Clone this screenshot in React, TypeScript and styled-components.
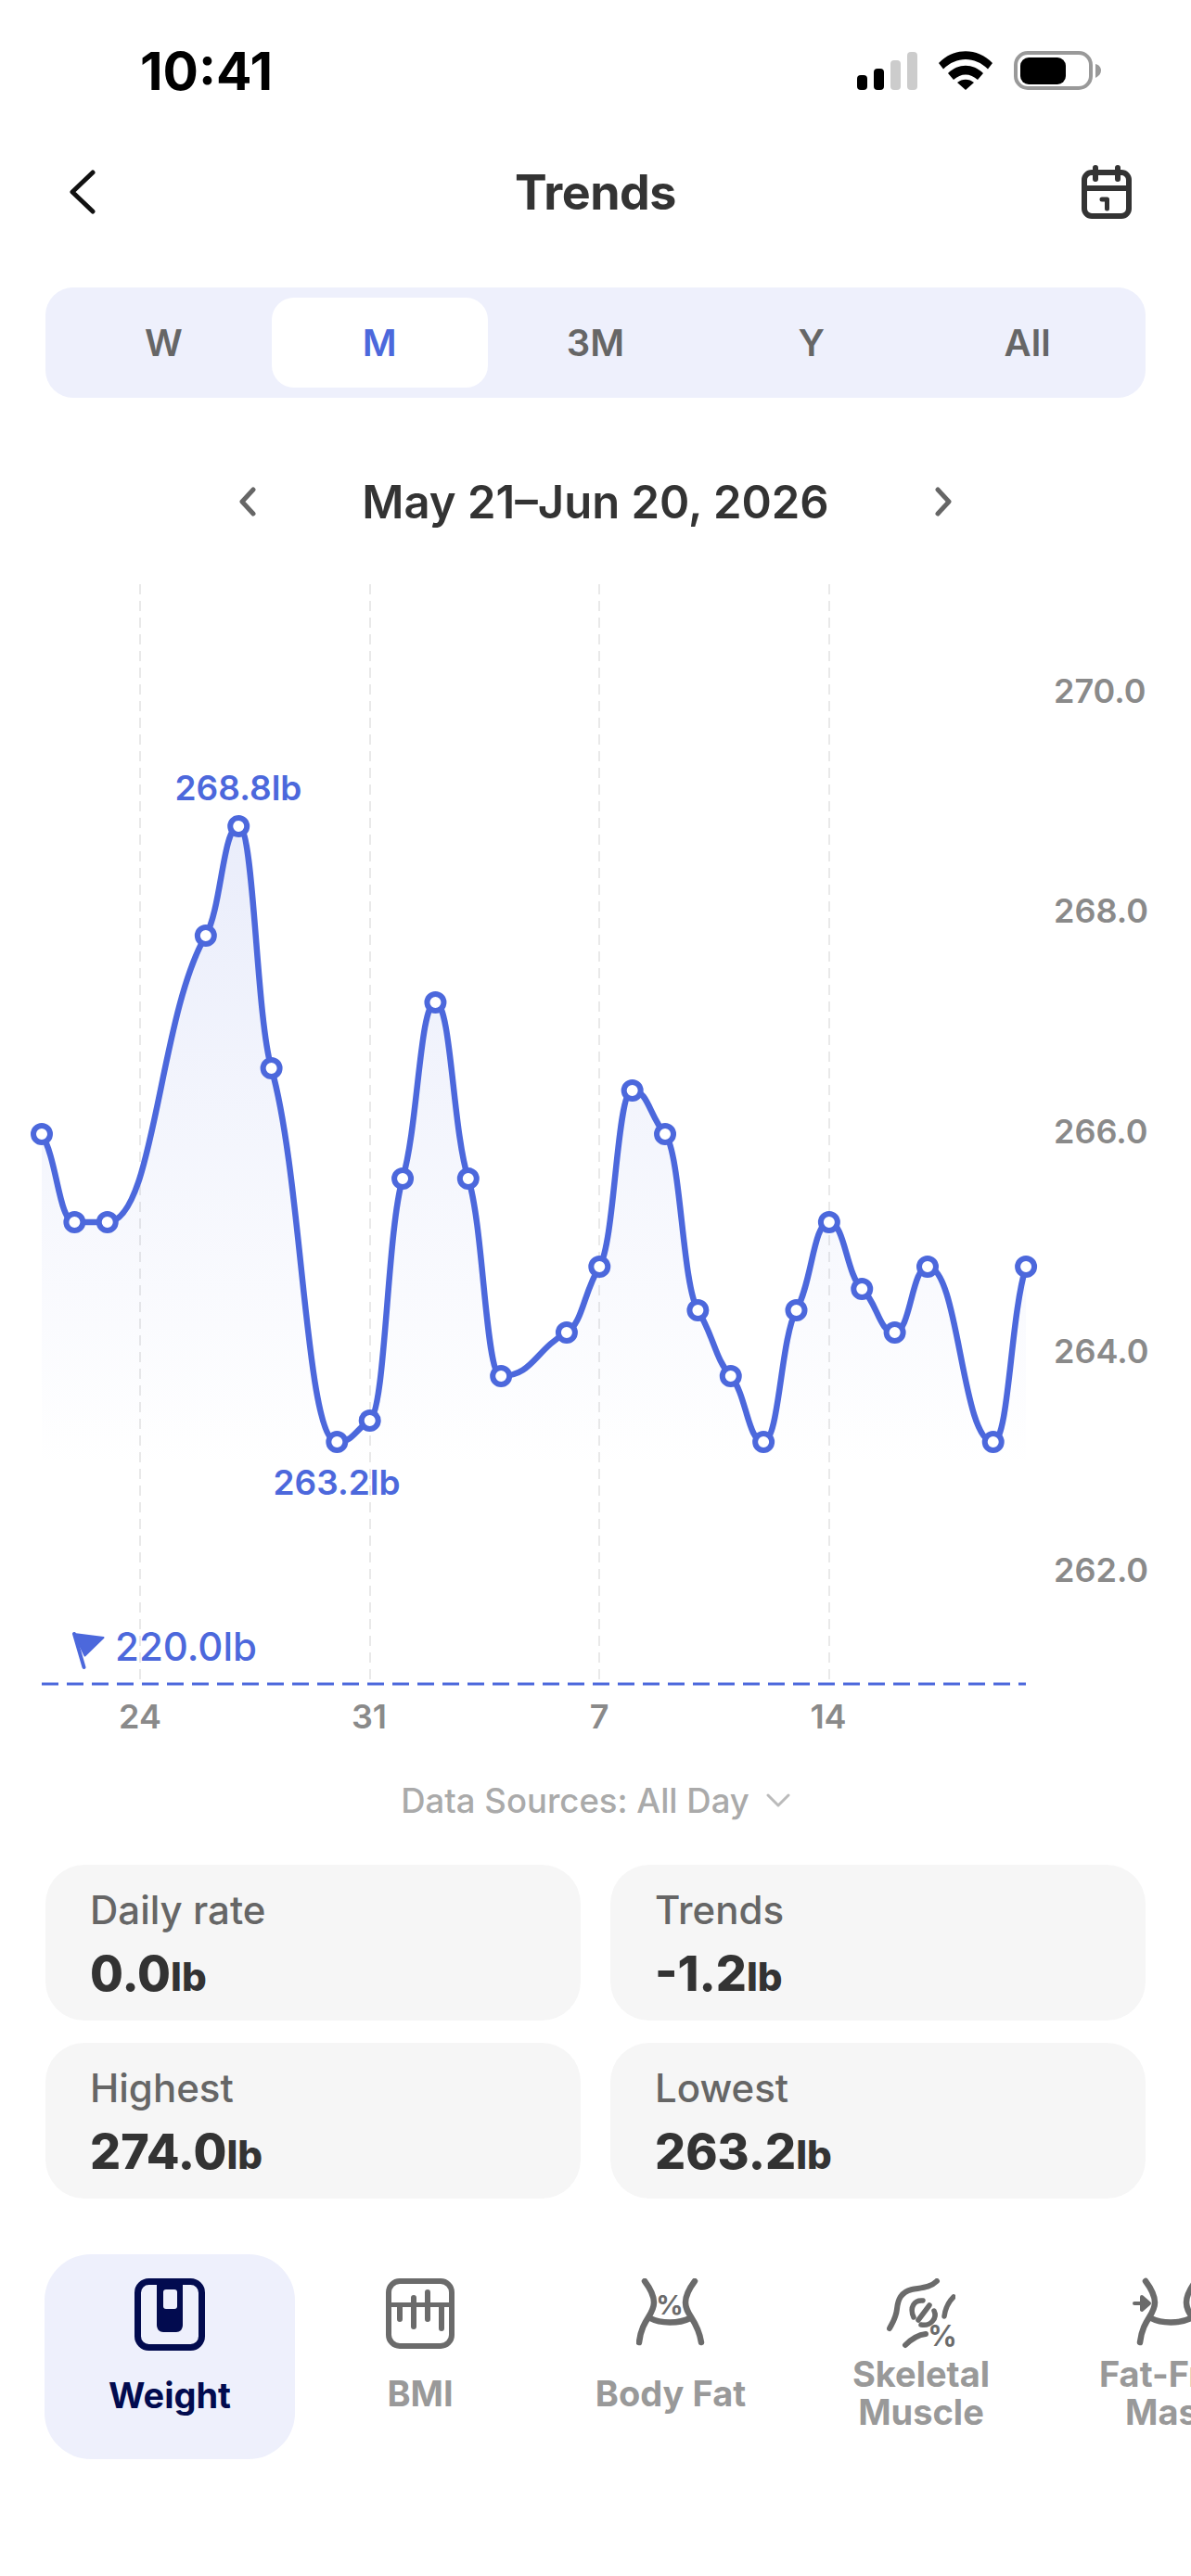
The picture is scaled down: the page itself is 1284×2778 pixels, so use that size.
import React from 'react';
import styled, { createGlobalStyle } from 'styled-components';

const BLUE = '#4c68dc';

const GlobalStyle = createGlobalStyle`
  html, body {
    margin: 0;
    padding: 0;
    background: #ffffff;
  }
  body {
    font-family: Inter, "Noto Sans", "Liberation Sans", sans-serif;
    -webkit-font-smoothing: antialiased;
  }
`;

type Point = { x: number; y: number };

const dayX = (i: number) => 45 + i * 35.37;

// day index from May 21 and the y of that reading, days with no reading are left out
const READINGS: [number, number][] = [
  [0, 1223], [1, 1318], [2, 1318], [5, 1009], [6, 891], [7, 1152], [9, 1555], [10, 1532],
  [11, 1271], [12, 1081], [13, 1271], [14, 1484], [16, 1437], [17, 1366], [18, 1176],
  [19, 1223], [20, 1413], [21, 1484], [22, 1555], [23, 1413], [24, 1318], [25, 1390],
  [26, 1437], [27, 1366], [29, 1555], [30, 1366],
];

const POINTS: Point[] = READINGS.map(([d, y]) => ({ x: dayX(d), y }));

// monotone curve, flatter at the points than d3 curveMonotoneX so the shoulders show
const smoothPath = (pts: Point[]) => {
  const n = pts.length;
  const slopes: number[] = [];
  for (let i = 0; i < n - 1; i++) {
    slopes.push((pts[i + 1].y - pts[i].y) / (pts[i + 1].x - pts[i].x));
  }
  const tangents: number[] = [slopes[0] * 0.6];
  for (let i = 1; i < n - 1; i++) {
    const a = slopes[i - 1];
    const b = slopes[i];
    tangents.push(a * b <= 0 ? 0 : (a * b * 1.1) / (a + b));
  }
  tangents.push(slopes[n - 2] * 0.6);

  let d = `M${pts[0].x} ${pts[0].y}`;
  for (let i = 0; i < n - 1; i++) {
    const dx = (pts[i + 1].x - pts[i].x) * 0.48;
    d += ` C${pts[i].x + dx} ${pts[i].y + tangents[i] * dx} ${pts[i + 1].x - dx} ${pts[i + 1].y - tangents[i + 1] * dx} ${pts[i + 1].x} ${pts[i + 1].y}`;
  }
  return d;
};

const LINE = smoothPath(POINTS);
const AREA_BOTTOM = 1585;
const AREA = `${LINE} L${POINTS[POINTS.length - 1].x} ${AREA_BOTTOM} L${POINTS[0].x} ${AREA_BOTTOM} Z`;

const Y_LABELS = [
  { text: '270.0', y: 758 },
  { text: '268.0', y: 995 },
  { text: '266.0', y: 1233 },
  { text: '264.0', y: 1470 },
  { text: '262.0', y: 1706 },
];

const X_LABELS = [
  { text: '24', x: 151, labelX: 151 },
  { text: '31', x: 399, labelX: 398 },
  { text: '7', x: 646, labelX: 646 },
  { text: '14', x: 894, labelX: 893 },
];

const Chart: React.FC = () => (
  <ChartSvg viewBox="0 581 1284 1331">
    <defs>
      <linearGradient id="areaFill" gradientUnits="userSpaceOnUse" x1="0" y1="891" x2="0" y2={AREA_BOTTOM}>
        <stop offset="0" stopColor={BLUE} stopOpacity="0.12" />
        <stop offset="1" stopColor={BLUE} stopOpacity="0" />
      </linearGradient>
    </defs>

    {X_LABELS.map((l) => (
      <line key={l.text} x1={l.x} x2={l.x} y1="630" y2="1811" stroke="#e9e9e9" strokeWidth="2" strokeDasharray="11 7" />
    ))}

    <path d={AREA} fill="url(#areaFill)" />
    <path d={LINE} fill="none" stroke={BLUE} strokeWidth="6.5" />
    {POINTS.map((p) => (
      <circle key={p.x} cx={p.x} cy={p.y} r="9" fill="#ffffff" stroke={BLUE} strokeWidth="6" />
    ))}

    <PeakLabel x="257" y="863" textAnchor="middle">268.8lb</PeakLabel>
    <PeakLabel x="363" y="1612" textAnchor="middle">263.2lb</PeakLabel>

    <path d="M80 1762 L111.5 1766 L91.5 1785.5 Z" fill={BLUE} stroke={BLUE} strokeWidth="2" strokeLinejoin="round" />
    <path d="M80 1762 L90.5 1798" fill="none" stroke={BLUE} strokeWidth="4" strokeLinecap="round" />
    <GoalLabel x="124" y="1791">220.0lb</GoalLabel>
    <line x1="45" x2="1106" y1="1816" y2="1816" stroke={BLUE} strokeWidth="3" strokeDasharray="18 9" />

    {Y_LABELS.map((l) => (
      <AxisLabel key={l.text} x="1136" y={l.y}>{l.text}</AxisLabel>
    ))}
    {X_LABELS.map((l) => (
      <AxisLabel key={l.text} x={l.labelX} y="1864" textAnchor="middle">{l.text}</AxisLabel>
    ))}
  </ChartSvg>
);

const SignalIcon = () => (
  <svg width="65" height="41" viewBox="0 0 65 41">
    <rect x="0" y="25" width="11" height="16" rx="4" fill="#000" />
    <rect x="18" y="18" width="11" height="23" rx="4" fill="#000" />
    <rect x="36" y="9" width="11" height="32" rx="4" fill="#cccccc" />
    <rect x="54" y="0" width="11" height="41" rx="4" fill="#cccccc" />
  </svg>
);

const WifiIcon = () => (
  <svg width="58" height="42" viewBox="0 0 58 42">
    <path d="M0 13 C16 -4 42 -4 58 13 L53 19.5 C39 5.5 19 5.5 5 19.5 Z" fill="#000" />
    <path d="M10 24 C21 13 37 13 48 24 L42 31 C34 23.5 24 23.5 16 31 Z" fill="#000" />
    <path d="M20 34 C25 29.5 33 29.5 38 34 L29 42 Z" fill="#000" />
  </svg>
);

const BatteryIcon = () => (
  <svg width="94" height="42" viewBox="0 0 94 42">
    <rect x="2" y="2" width="81" height="38" rx="13" fill="none" stroke="#999999" strokeWidth="4" />
    <rect x="7" y="7" width="49" height="29" rx="9" fill="#000" />
    <path d="M88 14 C92 15 94 18 94 21 C94 24 92 27 88 29 Z" fill="#999999" />
  </svg>
);

const BackIcon = () => (
  <svg width="28" height="48" viewBox="0 0 28 48">
    <path d="M25 3 L3 24 L25 45" fill="none" stroke="#111111" strokeWidth="5" strokeLinecap="round" strokeLinejoin="round" />
  </svg>
);

const CalendarIcon = () => (
  <svg width="54" height="58" viewBox="0 0 54 58">
    <rect x="3" y="8" width="48" height="47" rx="8" fill="none" stroke="#333333" strokeWidth="6" />
    <path d="M3 25 H51" stroke="#333333" strokeWidth="6" />
    <path d="M15 3 V15 M39 3 V15" stroke="#333333" strokeWidth="6" strokeLinecap="round" />
    <path d="M22 37 H27.5 V47" fill="none" stroke="#333333" strokeWidth="5" strokeLinecap="round" strokeLinejoin="round" />
  </svg>
);

const SmallChevron: React.FC<{ left?: boolean }> = ({ left }) => (
  <svg width="20" height="32" viewBox="0 0 20 32">
    <path
      d={left ? 'M16 3 L4 16 L16 29' : 'M4 3 L16 16 L4 29'}
      fill="none"
      stroke="#666666"
      strokeWidth="5"
      strokeLinecap="round"
      strokeLinejoin="round"
    />
  </svg>
);

const DownChevron = () => (
  <svg width="26" height="16" viewBox="0 0 26 16">
    <path d="M2 2 L13 13 L24 2" fill="none" stroke="#bbbbbb" strokeWidth="3" strokeLinecap="round" strokeLinejoin="round" />
  </svg>
);

const WeightIcon = () => (
  <svg width="76" height="78" viewBox="0 0 76 78" overflow="visible">
    <rect x="3.5" y="3.5" width="69" height="71" rx="12" fill="none" stroke="#020b4f" strokeWidth="7" />
    <path d="M24 2 H52 V50 C52 55 49 58 45 58 H31 C27 58 24 55 24 50 Z" fill="#020b4f" />
    <rect x="31" y="12" width="15" height="21" rx="3" fill="#eef0fc" />
  </svg>
);

const BmiIcon = () => (
  <svg width="74" height="76" viewBox="0 0 74 76">
    <rect x="3" y="3" width="68" height="70" rx="12" fill="none" stroke="#6b6b6b" strokeWidth="6" />
    <path d="M3 28.5 H71" stroke="#6b6b6b" strokeWidth="5" />
    <path d="M15 29 V44 M30 21 V52 M45 15 V44 M60 29 V54" stroke="#6b6b6b" strokeWidth="6" strokeLinecap="round" />
  </svg>
);

const Waist = () => (
  <>
    <path d="M9 3 C15 11 19 18 19 26 C19 40 6 44 3 69" fill="none" stroke="#6b6b6b" strokeWidth="6.5" strokeLinecap="round" />
    <path d="M63 3 C57 11 53 18 53 26 C53 40 66 44 70 69" fill="none" stroke="#6b6b6b" strokeWidth="6.5" strokeLinecap="round" />
    <path d="M15 43 C26 49 46 49 58 43" fill="none" stroke="#6b6b6b" strokeWidth="6.5" />
  </>
);

const BodyFatIcon = () => (
  <svg width="74" height="76" viewBox="0 0 74 76">
    <Waist />
    <IconPercent x="36" y="39" textAnchor="middle" fontSize="29">%</IconPercent>
  </svg>
);

const SkeletalIcon = () => (
  <svg width="74" height="76" viewBox="0 0 74 76">
    <path d="M54 3 C47 10 37 10 27 12 C15 15 12 23 11 33 C10 43 6 48 3 54" fill="none" stroke="#6b6b6b" strokeWidth="6" strokeLinecap="round" />
    <path d="M72 20 C66 26 63 33 62 41" fill="none" stroke="#6b6b6b" strokeWidth="5.5" strokeLinecap="round" />
    <path d="M20 72 C26 66 33 61 42 60" fill="none" stroke="#6b6b6b" strokeWidth="6" strokeLinecap="round" />
    <path d="M39 24 C30 23 24 31 29 42" fill="none" stroke="#6b6b6b" strokeWidth="5.5" strokeLinecap="round" />
    <path d="M46 29 L34 45" stroke="#6b6b6b" strokeWidth="5.5" strokeLinecap="round" />
    <path d="M51 35 C55 43 47 52 37 50" fill="none" stroke="#6b6b6b" strokeWidth="5.5" strokeLinecap="round" />
    <IconPercent x="60" y="73" textAnchor="middle" fontSize="31">%</IconPercent>
  </svg>
);

const FatFreeIcon = () => (
  <svg width="74" height="76" viewBox="0 0 74 76" overflow="visible">
    <Waist />
    <path d="M-3 27 H6 M5 20 L13 27 L5 34 Z" fill="#6b6b6b" stroke="#6b6b6b" strokeWidth="4" strokeLinejoin="round" strokeLinecap="round" />
  </svg>
);

type TabItem = { lines: string[]; icon: React.ReactNode; active?: boolean };

const TABS: TabItem[] = [
  { lines: ['Weight'], icon: <WeightIcon />, active: true },
  { lines: ['BMI'], icon: <BmiIcon /> },
  { lines: ['Body Fat'], icon: <BodyFatIcon /> },
  { lines: ['Skeletal', 'Muscle'], icon: <SkeletalIcon /> },
  { lines: ['Fat-Free', 'Mass'], icon: <FatFreeIcon /> },
];

const STATS = [
  { label: 'Daily rate', value: '0.0' },
  { label: 'Trends', value: '-1.2' },
  { label: 'Highest', value: '274.0' },
  { label: 'Lowest', value: '263.2' },
];

const RANGES = ['W', 'M', '3M', 'Y', 'All'];

export default function App() {
  return (
    <Page>
      <GlobalStyle />
      <StatusBar>
        <Time>10:41</Time>
        <StatusIcons>
          <SignalIcon />
          <WifiIcon />
          <BatteryIcon />
        </StatusIcons>
      </StatusBar>

      <Header>
        <BackAction>
          <BackIcon />
        </BackAction>
        <Title>Trends</Title>
        <CalendarAction>
          <CalendarIcon />
        </CalendarAction>
      </Header>

      <RangeTabs>
        {RANGES.map((r) => (
          <RangeTab key={r} $active={r === 'M'}>{r}</RangeTab>
        ))}
      </RangeTabs>

      <DateRow>
        <SmallChevron left />
        <DateText>May 21–Jun 20, 2026</DateText>
        <SmallChevron />
      </DateRow>

      <Chart />

      <DataSources>
        Data Sources: All Day
        <DownChevron />
      </DataSources>

      <StatGrid>
        {STATS.map((s) => (
          <StatCard key={s.label}>
            <StatLabel>{s.label}</StatLabel>
            <StatValue>
              {s.value}
              <StatUnit>lb</StatUnit>
            </StatValue>
          </StatCard>
        ))}
      </StatGrid>

      <MetricTabs>
        {TABS.map((t) => (
          <MetricTab key={t.lines[0]} $active={t.active}>
            {t.icon}
            <MetricLabel $active={t.active}>
              {t.lines.map((line) => (
                <span key={line}>{line}</span>
              ))}
            </MetricLabel>
          </MetricTab>
        ))}
      </MetricTabs>
    </Page>
  );
}

const Page = styled.div`
  width: 1284px;
  height: 2778px;
  overflow: hidden;
  background: #ffffff;
`;

const StatusBar = styled.div`
  height: 152px;
  display: flex;
  align-items: center;
  justify-content: space-between;
  padding: 0 97px 0 151px;
  box-sizing: border-box;
`;

const Time = styled.div`
  font-size: 57px;
  font-weight: 700;
  color: #000000;
`;

const StatusIcons = styled.div`
  display: flex;
  align-items: flex-end;
  gap: 23px;
  height: 42px;
`;

const Header = styled.div`
  height: 110px;
  display: grid;
  grid-template-columns: 1fr auto 1fr;
  align-items: center;
  padding: 0 64px;
  box-sizing: border-box;
`;

const BackAction = styled.div`
  display: flex;
  padding-left: 11px;
`;

const Title = styled.div`
  font-size: 52px;
  font-weight: 700;
  color: #333333;
  letter-spacing: -0.5px;
`;

const CalendarAction = styled.div`
  display: flex;
  justify-content: flex-end;
`;

const RangeTabs = styled.div`
  margin: 48px 49px 0;
  height: 119px;
  padding: 11px;
  box-sizing: border-box;
  display: grid;
  grid-template-columns: repeat(5, 1fr);
  background: #eef0fc;
  border-radius: 30px;
`;

const RangeTab = styled.div<{ $active?: boolean }>`
  display: flex;
  align-items: center;
  justify-content: center;
  font-size: 40px;
  font-weight: 600;
  border-radius: 24px;
  color: ${(p) => (p.$active ? BLUE : '#666666')};
  background: ${(p) => (p.$active ? '#ffffff' : 'transparent')};
`;

const DateRow = styled.div`
  margin-top: 72px;
  height: 80px;
  display: flex;
  align-items: center;
  justify-content: center;
  gap: 113px;
`;

const DateText = styled.div`
  font-size: 49px;
  font-weight: 600;
  color: #333333;
`;

const ChartSvg = styled.svg`
  display: block;
  width: 1284px;
  height: 1331px;
  font-family: Inter, "Noto Sans", sans-serif;
`;

const PeakLabel = styled.text`
  font-size: 37px;
  font-weight: 600;
  fill: ${BLUE};
`;

const GoalLabel = styled.text`
  font-size: 42px;
  font-weight: 500;
  fill: ${BLUE};
`;

const AxisLabel = styled.text`
  font-size: 36px;
  font-weight: 600;
  fill: #8a8a8a;
`;

const DataSources = styled.div`
  height: 60px;
  display: flex;
  align-items: center;
  justify-content: center;
  gap: 18px;
  font-size: 36.5px;
  font-weight: 500;
  color: #aaaaaa;
`;

const StatGrid = styled.div`
  margin: 39px 49px 0;
  display: grid;
  grid-template-columns: 577px 577px;
  grid-auto-rows: 168px;
  column-gap: 32px;
  row-gap: 24px;
`;

const StatCard = styled.div`
  background: #f6f6f6;
  border-radius: 42px;
  padding: 23px 48px 0;
  box-sizing: border-box;
`;

const StatLabel = styled.div`
  font-size: 42px;
  font-weight: 500;
  line-height: 52px;
  color: #666666;
`;

const StatValue = styled.div`
  margin-top: 13px;
  font-size: 52px;
  font-weight: 800;
  line-height: 60px;
  color: #333333;
`;

const StatUnit = styled.span`
  font-size: 42px;
`;

const MetricTabs = styled.div`
  margin: 60px 0 0 48px;
  display: flex;
  width: 1400px;
`;

const MetricTab = styled.div<{ $active?: boolean }>`
  flex: 0 0 270px;
  height: 221px;
  padding-top: 26px;
  box-sizing: border-box;
  display: flex;
  flex-direction: column;
  align-items: center;
  border-radius: 50px;
  background: ${(p) => (p.$active ? '#eef0fc' : 'transparent')};
`;

const MetricLabel = styled.div<{ $active?: boolean }>`
  height: 96px;
  display: flex;
  flex-direction: column;
  align-items: center;
  justify-content: center;
  font-size: 38px;
  font-weight: 700;
  line-height: 41px;
  color: ${(p) => (p.$active ? '#020b4f' : '#999999')};
`;

const IconPercent = styled.text`
  font-family: Inter, sans-serif;
  font-weight: 700;
  fill: #6b6b6b;
`;
